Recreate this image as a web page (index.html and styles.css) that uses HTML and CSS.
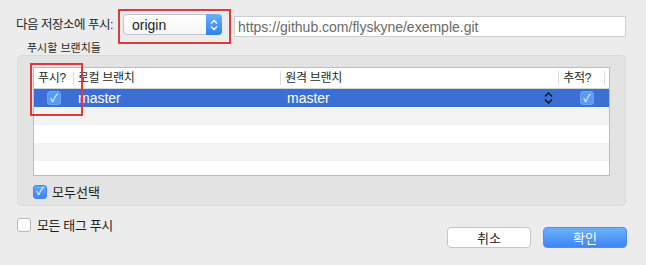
FILE: index.html
```html
<!DOCTYPE html>
<html lang="ko">
<head>
    <meta charset="UTF-8">
    <title>푸시</title>
    <link rel="stylesheet" href="styles.css">
</head>
<body>
    <div class="dialog">

        <!-- Remote row -->
        <div class="remote-row">
            <span class="remote-label">다음 저장소에 푸시:</span>
            <span class="select marked">
                <span class="select-value">origin</span>
                <span class="select-arrows">
                    <svg width="8" height="12" viewBox="0 0 8 12"><path d="M1 4.5 L4 1.5 L7 4.5 M1 7.5 L4 10.5 L7 7.5" fill="none" stroke="#fff" stroke-width="1.4"/></svg>
                </span>
            </span>
            <input class="url-field" type="text" value="https://github.com/flyskyne/exemple.git">
        </div>

        <div class="section-label">푸시할 브랜치들</div>

        <!-- Branch group -->
        <div class="group">
            <div class="branch-table">
                <div class="row header">
                    <div class="cell col-push">푸시?</div>
                    <div class="cell col-local">로컬 브랜치</div>
                    <div class="cell col-remote">원격 브랜치</div>
                    <div class="cell col-track">추적?</div>
                    <div class="cell col-rest"></div>
                </div>
                <div class="row selected">
                    <div class="cell col-push"><span class="check on light">&#10003;</span></div>
                    <div class="cell col-local">master</div>
                    <div class="cell col-remote">
                        master
                        <svg class="stepper" width="9" height="12" viewBox="0 0 9 12"><path d="M1 4.5 L4.5 1 L8 4.5 M1 7.5 L4.5 11 L8 7.5" fill="none" stroke="#111" stroke-width="1.3"/></svg>
                    </div>
                    <div class="cell col-track"><span class="check on light">&#10003;</span></div>
                    <div class="cell col-rest"></div>
                </div>
                <div class="row alt"></div>
                <div class="row"></div>
                <div class="row alt"></div>
                <div class="row last"></div>
                <div class="annotation"></div>
            </div>

            <label class="check-label">
                <span class="check on">&#10003;</span>
                모두선택
            </label>
        </div>

        <!-- Footer -->
        <div class="footer">
            <label class="check-label tags">
                <span class="check"></span>
                모든 태그 푸시
            </label>
            <div class="buttons">
                <button class="btn">취소</button>
                <button class="btn primary">확인</button>
            </div>
        </div>

    </div>
</body>
</html>
```

FILE: styles.css
```css
/* Reset */
* {
    box-sizing: border-box;
    margin: 0;
    padding: 0;
}

html, body {
    width: 646px;
    height: 265px;
    overflow: hidden;
}

body {
    font-family: 'Liberation Sans', 'Noto Sans CJK KR', sans-serif;
    background-color: #ececec;
    color: #1e1e1e;
    font-size: 13px;
}

.dialog {
    padding: 14px 20px 0 16px;
}

/* Remote row */
.remote-row {
    display: flex;
    align-items: flex-start;
    height: 23px;
}

.remote-label {
    font-size: 12.5px;
    letter-spacing: -0.5px;
    line-height: 21px;
    margin-top: 1px;
    width: 107px;
    white-space: nowrap;
}

.select {
    position: relative;
    display: flex;
    align-items: center;
    width: 99px;
    height: 21px;
    background: linear-gradient(#ffffff, #f6f6f6);
    border: 1px solid #c4c4c4;
    border-radius: 4px;
}

.select-value {
    flex: 1;
    padding-left: 8px;
    font-size: 14px;
}

.select-arrows {
    display: flex;
    align-items: center;
    justify-content: center;
    width: 16px;
    height: 21px;
    margin: -1px -1px -1px 0;
    border-radius: 0 4px 4px 0;
    background: linear-gradient(#6bb0fb, #2f7ff7);
}

/* Red annotation around the remote select */
.select.marked::after {
    content: '';
    position: absolute;
    left: -6px;
    top: -6px;
    right: -10px;
    bottom: -10px;
    border: 2px solid #dc3a3e;
}

.url-field {
    margin-left: 12px;
    margin-top: 2px;
    flex: 1;
    height: 21px;
    border: 1px solid #cfcfcf;
    background: #fff;
    padding: 0 3px;
    font-family: inherit;
    font-size: 14px;
    color: #6a6a6a;
    outline: none;
}

.section-label {
    font-size: 11px;
    line-height: 14px;
    margin: 4px 0 0 11px;
    color: #2a2a2a;
}

/* Group box */
.group {
    margin-left: 1px;
    width: 609px;
    height: 151px;
    background: #e3e3e3;
    border: 1px solid #dadada;
    border-radius: 4px;
    padding: 11px 15px 0 15px;
}

.branch-table {
    position: relative;
    width: 577px;
    height: 109px;
    background: #fff;
    border: 1px solid #bdbdbd;
}

.row {
    display: flex;
    height: 18px;
}

.row.alt {
    background: #f3f3f3;
}

.row.last {
    height: 13px;
}

.row.header {
    height: 21px;
    border-bottom: 1px solid #d4d4d4;
    font-size: 12px;
    letter-spacing: -0.3px;
    color: #2a2a2a;
}

.row.header .cell {
    padding-left: 4px;
    border-right: 1px solid #dcdcdc;
    margin: 3px 0;
    line-height: 14px;
}

.row.header .col-rest {
    border-right: none;
}

.row.selected {
    background: #3d6ed6;
    color: #fff;
    font-size: 14px;
    line-height: 18px;
}

.cell {
    display: flex;
    align-items: center;
}

.col-push { width: 40px; }
.col-local { width: 209px; }
.col-remote { width: 280px; }
.col-track { width: 46px; }
.col-rest { flex: 1; }

.row.selected .col-local,
.row.selected .col-remote {
    padding-left: 4px;
}

.row.selected .col-push {
    padding-left: 13px;
}

.row.selected .col-track {
    padding-left: 17px;
}

.stepper {
    margin-left: auto;
    margin-right: 10px;
}

/* Red annotation around the push column */
.annotation {
    position: absolute;
    left: -4px;
    top: -5px;
    width: 53px;
    height: 53px;
    border: 2px solid #dc3a3e;
}

/* Checkboxes */
.check {
    display: inline-flex;
    align-items: center;
    justify-content: center;
    width: 14px;
    height: 14px;
    border-radius: 3px;
    border: 1px solid #b8b8b8;
    background: #fff;
    color: #fff;
    font-size: 11px;
    line-height: 1;
}

.check.on {
    border-color: #3c86f0;
    background: linear-gradient(#69a9fa, #3a85f6);
}

.check.light {
    border-color: #6ea6f5;
    background: #5b9af3;
}

.check-label {
    display: flex;
    align-items: center;
    gap: 5px;
    font-size: 13px;
    margin-top: 6px;
}

/* Footer */
.footer {
    display: flex;
    justify-content: space-between;
    align-items: flex-start;
}

.check-label.tags {
    margin-top: 9px;
    margin-left: 1px;
    gap: 6px;
    letter-spacing: -0.4px;
}

.buttons {
    display: flex;
    gap: 12px;
    margin-top: 21px;
    margin-right: -1px;
}

.btn {
    width: 84px;
    height: 21px;
    border-radius: 4px;
    border: 1px solid #c6c6c6;
    background: #fff;
    font-family: inherit;
    font-size: 13px;
    color: #1e1e1e;
}

.btn.primary {
    border-color: #4a8ff5;
    background: linear-gradient(#6cb1fb, #3b86f6);
    color: #fff;
}
```
